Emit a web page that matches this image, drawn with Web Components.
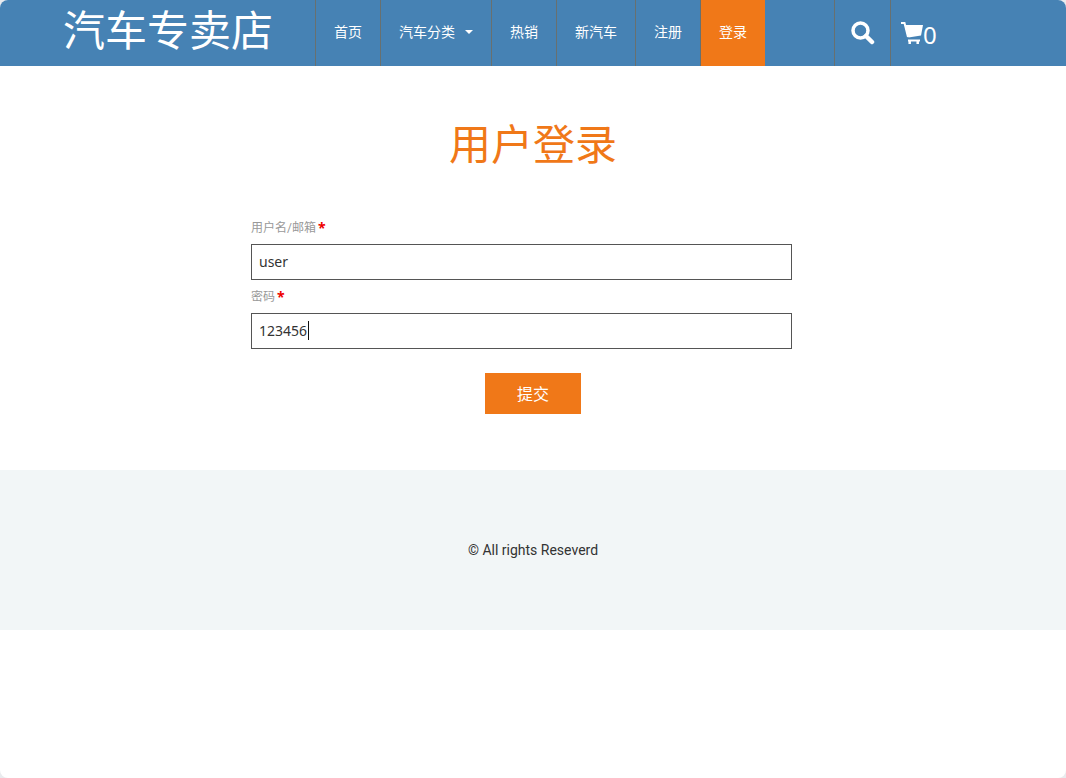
<!DOCTYPE html>
<html lang="zh-CN">
<head>
<meta charset="utf-8">
<meta name="viewport" content="width=device-width, initial-scale=1">
<title>用户登录</title>
<style>
  html { background: #e9ebee; }
  body { margin: 0; font-family: Roboto, "Noto Sans CJK SC", sans-serif; color: #333; }
</style>
</head>
<body>
<store-page>
  <store-header slot="header" brand="汽车专卖店" count="0">
    <nav-item>首页</nav-item>
    <nav-item dropdown>汽车分类</nav-item>
    <nav-item>热销</nav-item>
    <nav-item>新汽车</nav-item>
    <nav-item>注册</nav-item>
    <nav-item active>登录</nav-item>
  </store-header>
  <login-form heading="用户登录">
    <text-field label="用户名/邮箱" name="username" value="user"></text-field>
    <text-field label="密码" name="password" value="123456" editing></text-field>
  </login-form>
  <store-footer slot="footer">© All rights Reseverd</store-footer>
</store-page>

<script>
const define = (name, render) => customElements.define(name, class extends HTMLElement {
  connectedCallback() {
    if (this.shadowRoot) return;
    this.attachShadow({ mode: 'open' }).innerHTML = render(this);
  }
});

define('store-page', () => `
  <style>
    :host { display: block; min-height: 100vh; background: #fff; border-radius: 8px; overflow: hidden; }
    main { display: block; }
  </style>
  <slot name="header"></slot>
  <main><slot></slot></main>
  <slot name="footer"></slot>`);

define('nav-item', el => `
  <style>
    :host { display: flex; border-left: 1px solid #68706f; }
    :host([active]) { background: #f07818; }
    a { display: flex; align-items: center; gap: 10px; padding: 0 18px 2px; color: #fff;
        font-size: 14px; line-height: 20px; text-decoration: none; white-space: nowrap; }
    .caret { border: 4px solid transparent; border-top-color: #fff; border-bottom: 0; }
  </style>
  <a href="#"><slot></slot>${el.hasAttribute('dropdown') ? '<span class="caret"></span>' : ''}</a>`);

define('store-header', el => `
  <style>
    :host { display: block; background: #4682b4; color: #fff; }
    .bar { display: flex; height: 66px; max-width: 940px; margin: 0 auto; padding: 0 15px; }
    a { color: inherit; text-decoration: none; }
    .brand { flex: 0 0 252px; font-size: 42px; line-height: 64px; white-space: nowrap; }
    nav { display: flex; }
    .tools { display: flex; margin-left: auto; flex: 0 0 169px; }
    button, .cart { border: 0; border-left: 1px solid #68706f; box-sizing: border-box; }
    button { width: 56px; padding: 0; background: none; color: inherit; display: flex;
             align-items: center; justify-content: center; }
    .cart { flex: 1; display: flex; align-items: center; padding-left: 10px;
            font: 24px/28px "Noto Sans", sans-serif; }
    .cart span { padding-top: 4px; }
    svg { display: block; fill: none; stroke: currentColor; }
  </style>
  <div class="bar">
    <a class="brand" href="#">${el.getAttribute('brand')}</a>
    <nav><slot></slot></nav>
    <div class="tools">
      <button type="button" aria-label="搜索">
        <svg width="24" height="24" viewBox="0 0 24 24"><circle cx="9.5" cy="9.5" r="7.5" stroke-width="3.500"/><path d="M15 15l6 6" stroke-width="4.500" stroke-linecap="round"/></svg>
      </button>
      <a class="cart" href="#" aria-label="购物车">
        <svg width="22" height="24" viewBox="0 0 22 24"><path d="M0 2h3.500l3.500 14" stroke-width="2"/><path d="M3.500 4H22l-2 10.500L7.500 16.500z" fill="currentColor" stroke="none"/><path d="M7 19.500h12" stroke-width="2"/><path d="M8.700 20v3M16.700 20v3" stroke-width="2.500"/></svg>
        <span>${el.getAttribute('count')}</span>
      </a>
    </div>
  </div>`);

define('text-field', el => `
  <style>
    :host { display: block; }
    label { display: block; font-size: 12px; line-height: 18px; color: #999; }
    label b { color: #e00; margin-left: 2px; }
    .box { position: relative; margin-top: 7px; }
    input { display: block; box-sizing: border-box; width: 100%; height: 36px; padding: 0 7px 2px;
            border: 1px solid #555; border-radius: 0; background: #fff; color: #333;
            font: 14px/20px "Noto Sans", "Noto Sans CJK SC", sans-serif; outline: 0; }
    .cursor { position: absolute; left: 57px; top: 8px; width: 1px; height: 19px; background: #111; }
    b { font: bold 14px/18px "Noto Sans", sans-serif; vertical-align: top; }
  </style>
  <label for="f">${el.getAttribute('label')}<b>*</b></label>
  <div class="box">
    <input id="f" type="text" name="${el.getAttribute('name')}" value="${el.getAttribute('value')}">
    ${el.hasAttribute('editing') ? '<span class="cursor"></span>' : ''}
  </div>`);

define('login-form', el => `
  <style>
    :host { display: block; padding: 50px 15px 56px; }
    h1 { margin: 0 0 43px; font-size: 42px; line-height: 60px; font-weight: 400; color: #f07818; text-align: center; }
    form { max-width: 564px; margin: 0 auto; }
    .fields { display: grid; gap: 8px; margin-right: 23px; }
    button { display: block; margin: 24px auto 0; width: 96px; height: 41px; padding: 2px 0 0; border: 0;
             background: #f07818; color: #fff; font: 16px/24px Roboto, "Noto Sans CJK SC", sans-serif; }
  </style>
  <h1>${el.getAttribute('heading')}</h1>
  <form>
    <div class="fields"><slot></slot></div>
    <button type="button">提交</button>
  </form>`);

define('store-footer', () => `
  <style>
    :host { display: block; background: #f2f6f7; padding: 70px 15px; text-align: center; font-size: 14px; line-height: 20px; }
  </style>
  <footer><slot></slot></footer>`);
</script>
</body>
</html>
